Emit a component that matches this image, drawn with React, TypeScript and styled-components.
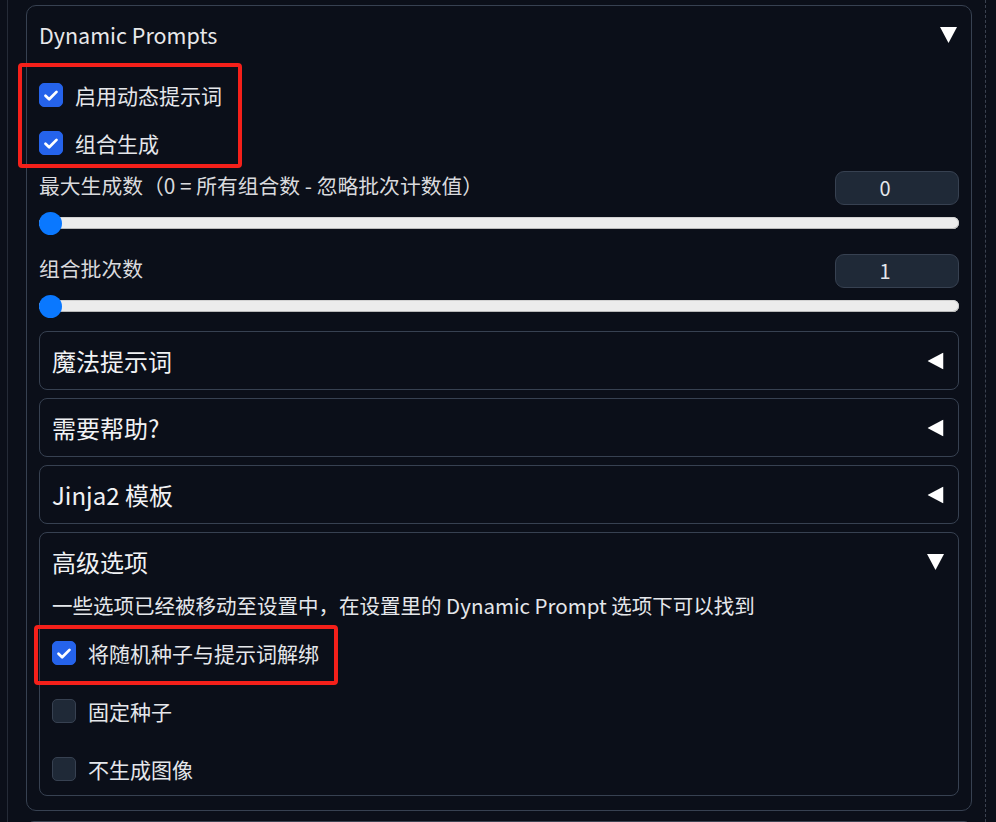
import React from 'react';
import styled, { createGlobalStyle } from 'styled-components';

const GlobalStyle = createGlobalStyle`
	html, body {
		margin: 0;
		padding: 0;
		background: #0b0f19;
		overflow: hidden;
	}
	body {
		font-family: "Noto Sans CJK SC", "Noto Sans", sans-serif;
		color: #e5e7eb;
	}
`;

const Page = styled.div`
	display: flex;
	height: 822px;
	padding-left: 7px;
	box-sizing: border-box;
`;

const Column = styled.div`
	width: 979px;
	box-sizing: border-box;
	border-left: 1px solid #252b37;
	border-right: 1px dashed #3b4250;
	padding: 5px 13px 0 18px;
	display: flex;
	flex-direction: column;
	gap: 10px;
`;

const Panel = styled.div`
	border: 1px solid #374151;
	border-radius: 10px;
	padding: 0 12px 14px;
	display: flex;
	flex-direction: column;
`;

const NextPanel = styled.div`
	border: 1px solid #3d4554;
	border-radius: 8px;
	height: 60px;
	flex-shrink: 0;
`;

const PanelHeader = styled.div`
	display: flex;
	justify-content: space-between;
	align-items: center;
	padding: 13px 2px 13px 0;
	line-height: 32px;
	font-size: 21.5px;
	color: #e8e8ea;
`;

const CaretIcon = styled.svg<{ $open: boolean }>`
	display: block;
	transform: rotate(${(p) => (p.$open ? '0deg' : '90deg')});
`;

const CheckGroup = styled.div`
	position: relative;
	display: flex;
	flex-direction: column;
	gap: 12px;
	padding: 13px 0 6px;
`;

const CheckList = styled.div`
	display: flex;
	flex-direction: column;
	gap: 22px;
	padding: 15px 0 8px;
`;

const CheckRow = styled.label`
	position: relative;
	display: flex;
	align-items: center;
	gap: 12px;
	height: 36px;
	font-size: 21px;
	color: #e5e7eb;
`;

const Box = styled.span<{ $checked: boolean }>`
	width: 24px;
	height: 24px;
	box-sizing: border-box;
	border-radius: 5px;
	display: flex;
	align-items: center;
	justify-content: center;
	flex-shrink: 0;
	background: ${(p) => (p.$checked ? '#2563eb' : '#1f2937')};
	border: 1px solid ${(p) => (p.$checked ? '#2563eb' : '#374151')};
`;

const Highlight = styled.span<{ $l: number; $t: number; $w: number; $h: number }>`
	position: absolute;
	left: ${(p) => p.$l}px;
	top: ${(p) => p.$t}px;
	width: ${(p) => p.$w}px;
	height: ${(p) => p.$h}px;
	box-sizing: border-box;
	border: 4px solid #f5201a;
	border-radius: 4px;
	pointer-events: none;
`;

const SliderStack = styled.div`
	display: flex;
	flex-direction: column;
	gap: 19px;
	padding-top: 4px;
`;

const SliderField = styled.div`
	display: flex;
	flex-direction: column;
`;

const FieldHead = styled.div`
	display: flex;
	justify-content: space-between;
	align-items: flex-start;
`;

const FieldLabel = styled.span`
	font-size: 20.8px;
	line-height: 30px;
	margin-top: -1px;
	color: #d9dadd;
`;

const NumBox = styled.div`
	width: 124px;
	height: 34px;
	box-sizing: border-box;
	border: 1px solid #374151;
	border-radius: 9px;
	background: #1f2937;
	text-align: center;
	padding-right: 24px;
	font-size: 20px;
	line-height: 32px;
	color: #e5e7eb;
`;

const Range = styled.input`
	-webkit-appearance: none;
	appearance: none;
	display: block;
	width: 100%;
	height: 24px;
	margin: 6px 0 0;
	padding: 0;
	background: transparent;

	&::-webkit-slider-runnable-track {
		height: 12px;
		border-radius: 6px;
		background: #ececec;
		box-shadow: inset 0 -1px 0 #b9b9b9, inset 0 0 0 1px #d2d2d2;
	}
	&::-webkit-slider-thumb {
		-webkit-appearance: none;
		width: 23px;
		height: 23px;
		margin-top: -5.5px;
		border-radius: 50%;
		background: #0a78ff;
		border: none;
	}
`;

const AccordionStack = styled.div`
	display: flex;
	flex-direction: column;
	gap: 8px;
	margin-top: 13px;
`;

const Accordion = styled.div`
	border: 1px solid #374151;
	border-radius: 8px;
`;

const AccHeader = styled.div`
	display: flex;
	justify-content: space-between;
	align-items: center;
	padding: 13px 14px 13px 12px;
	line-height: 31px;
	font-size: 24px;
	color: #f1f2f4;
`;

const AccBody = styled.div`
	padding: 0 12px;
`;

const Note = styled.div`
	font-size: 20.5px;
	line-height: 30px;
	color: #e5e7eb;
`;

const Caret = ({ open }: { open: boolean }) => (
	<CaretIcon $open={open} width='17' height='16' viewBox='0 0 17 16'>
		<polygon points='0,0 17,0 8.5,16' fill='#ffffff' />
	</CaretIcon>
);

const Check = ({
	label,
	checked,
	children,
}: {
	label: string;
	checked: boolean;
	children?: React.ReactNode;
}) => (
	<CheckRow>
		<Box $checked={checked}>
			{checked && (
				<svg width='24' height='24' viewBox='0 0 24 24'>
					<path
						d='M6 12.8 L10 16.6 L18 8.6'
						fill='none'
						stroke='#ffffff'
						strokeWidth='3'
						strokeLinecap='round'
						strokeLinejoin='round'
					/>
				</svg>
			)}
		</Box>
		{label}
		{children}
	</CheckRow>
);

const Slider = ({ label, value }: { label: string; value: number }) => (
	<SliderField>
		<FieldHead>
			<FieldLabel>{label}</FieldLabel>
			<NumBox>{value}</NumBox>
		</FieldHead>
		<Range type='range' min={0} max={100} defaultValue={0} readOnly />
	</SliderField>
);

const closedSections = ['魔法提示词', '需要帮助?', 'Jinja2 模板'];

const App = () => {
	return (
		<>
			<GlobalStyle />
			<Page>
				<Column>
					<Panel>
						<PanelHeader>
							<span>Dynamic Prompts</span>
							<Caret open={true} />
						</PanelHeader>
						<CheckGroup>
							<Highlight $l={-21} $t={-1} $w={224} $h={105} />
							<Check label='启用动态提示词' checked={true} />
							<Check label='组合生成' checked={true} />
						</CheckGroup>
						<SliderStack>
							<Slider label='最大生成数（0 = 所有组合数 - 忽略批次计数值）' value={0} />
							<Slider label='组合批次数' value={1} />
						</SliderStack>
						<AccordionStack>
							{closedSections.map((title) => (
								<Accordion key={title}>
									<AccHeader>
										<span>{title}</span>
										<Caret open={false} />
									</AccHeader>
								</Accordion>
							))}
							<Accordion>
								<AccHeader>
									<span>高级选项</span>
									<Caret open={true} />
								</AccHeader>
								<AccBody>
									<Note>
										一些选项已经被移动至设置中，在设置里的 Dynamic Prompt 选项下可以找到
									</Note>
									<CheckList>
										<Check label='将随机种子与提示词解绑' checked={true}>
											<Highlight $l={-18} $t={-10} $w={304} $h={60} />
										</Check>
										<Check label='固定种子' checked={false} />
										<Check label='不生成图像' checked={false} />
									</CheckList>
								</AccBody>
							</Accordion>
						</AccordionStack>
					</Panel>
					<NextPanel />
				</Column>
			</Page>
		</>
	);
};

export default App;
